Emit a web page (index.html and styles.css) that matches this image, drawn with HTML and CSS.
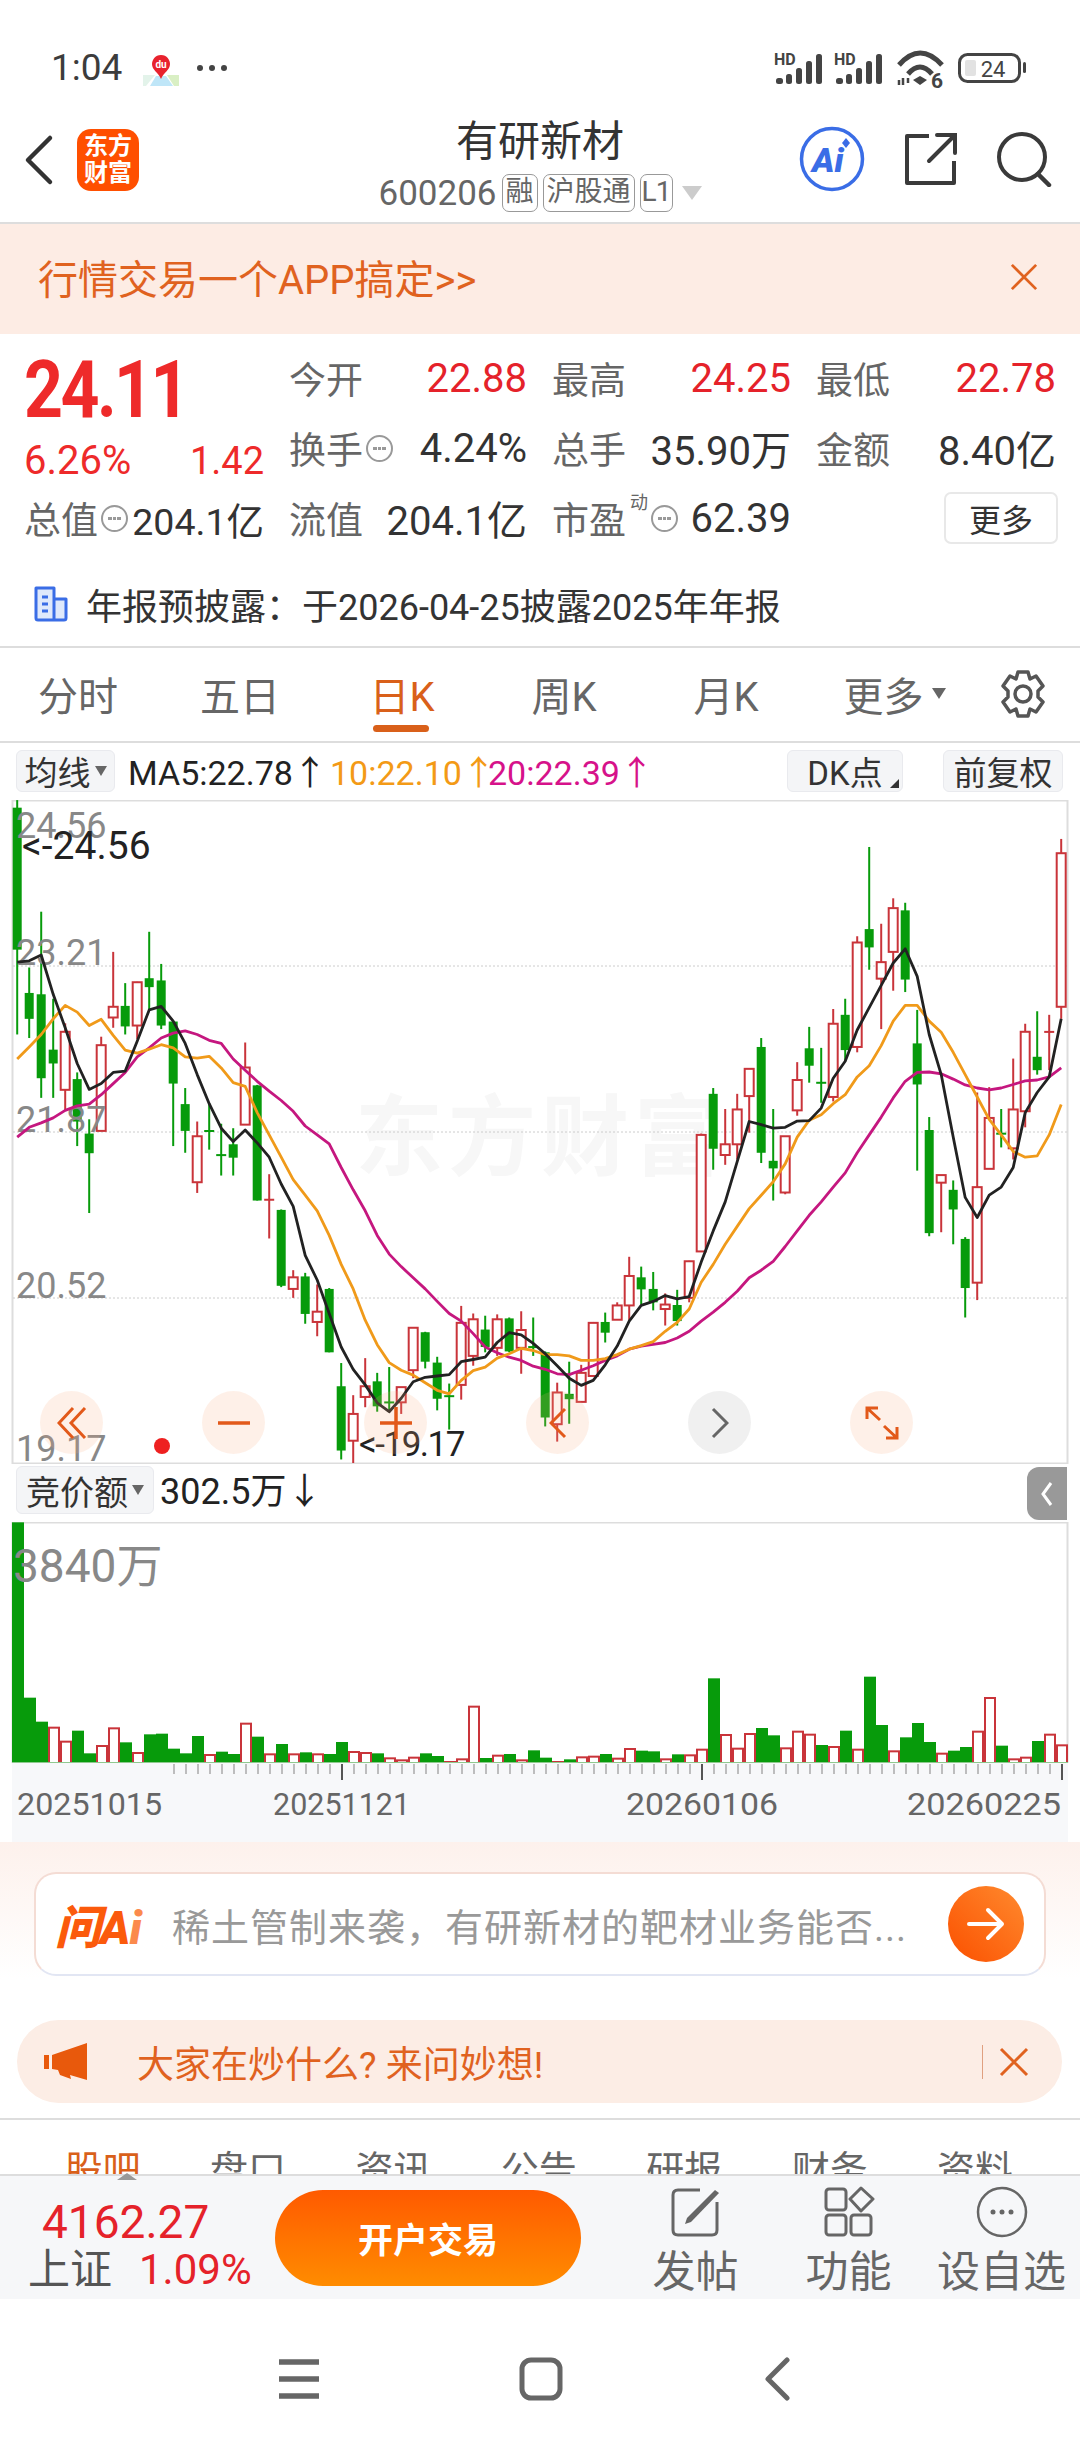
FILE: index.html
```html
<!DOCTYPE html>
<html>
  <head>
    <meta charset="utf-8">
    <title>有研新材</title>
    <link rel="stylesheet" href="styles.css">
  </head>
  <body>
    <div class="status_bar">
      <span class="status_time">1:04</span>
      <svg class="status_map" width="36" height="36" viewBox="0 0 36 36">
        <rect width="36" height="36" rx="8" fill="#fff"/>
        <path d="M0 25 L12 25 L3 36 L0 36 Z" fill="#e3f3ea"/>
        <path d="M13 26 L23 26 L30 36 L7 36 Z" fill="#bfe6f8"/>
        <path d="M24 25 L36 25 L36 36 L31 36 Z" fill="#d9efc4"/>
        <path d="M18 5 C12 5 9 10 9 14 C9 20 15 22 18 29 C21 22 27 20 27 14 C27 10 24 5 18 5 Z" fill="#e8222e"/>
        <text class="status_du" x="18" y="18" text-anchor="middle">du</text>
      </svg>
      <span class="status_dots"><i></i><i></i><i></i></span>
      <svg class="status_right" width="262" height="40" viewBox="770 50 262 40">
        <g>
          <text class="status_hd" x="776" y="65">HD</text>
          <rect x="778" y="78" width="7" height="6" rx="2.5" fill="#444"/>
          <rect x="788" y="74" width="6" height="10" rx="2.5" fill="#444"/>
          <rect x="798" y="68" width="6" height="16" rx="2.5" fill="#444"/>
          <rect x="808" y="61" width="6" height="23" rx="2.5" fill="#444"/>
          <rect x="818" y="54" width="6" height="30" rx="2.5" fill="#444"/>
        </g>
        <g transform="translate(60 0)">
          <text class="status_hd" x="776" y="65">HD</text>
          <rect x="778" y="78" width="7" height="6" rx="2.5" fill="#444"/>
          <rect x="788" y="74" width="6" height="10" rx="2.5" fill="#444"/>
          <rect x="798" y="68" width="6" height="16" rx="2.5" fill="#444"/>
          <rect x="808" y="61" width="6" height="23" rx="2.5" fill="#444"/>
          <rect x="818" y="54" width="6" height="30" rx="2.5" fill="#444"/>
        </g>
        <path d="M901 65 Q922 41 944 65" fill="none" stroke="#444" stroke-width="5"/>
        <path d="M910 74 Q922 60 934 74" fill="none" stroke="#444" stroke-width="5"/>
        <path d="M915 80 L922 76 L929 80 L922 85 Z" fill="#444"/>
        <path d="M901 80 V85 M905 78 V85 M910 78 V83" stroke="#444" stroke-width="2.5"/>
        <text class="status_six" x="933" y="88">6</text>
        <rect x="961.5" y="54.5" width="60" height="27" rx="8" fill="none" stroke="#444" stroke-width="3"/>
        <rect x="967" y="60" width="11" height="16" rx="2" fill="#e2e2e2"/>
        <text class="status_batt" x="995" y="77" text-anchor="middle">24</text>
        <rect x="1025" y="62" width="3" height="11" rx="1.5" fill="#444"/>
      </svg>
    </div>

    <div class="nav_bar">
      <div class="nav_left">
        <svg width="32" height="52" viewBox="0 0 32 52"><path d="M27 4 L5 26 L27 48" fill="none" stroke="#333" stroke-width="4.5" stroke-linecap="round" stroke-linejoin="round"/></svg>
        <div class="nav_logo"><span>东方</span><span>财富</span></div>
      </div>
      <div class="nav_center">
        <div class="nav_title">有研新材</div>
        <div class="nav_sub">
          <span class="nav_code">600206</span>
          <span class="nav_tag">融</span>
          <span class="nav_tag">沪股通</span>
          <span class="nav_tag nav_level">L1</span>
          <span class="nav_tri"></span>
        </div>
      </div>
      <div class="nav_right">
        <svg width="66" height="66" viewBox="0 0 66 66">
          <circle cx="33" cy="33" r="30.5" fill="none" stroke="#3a6de6" stroke-width="3.5"/>
          <text class="nav_ai" x="13" y="46">Ai</text>
          <path d="M47 12 L51 17 L47 22 L43 17 Z" fill="#3a6de6"/>
        </svg>
        <svg width="54" height="54" viewBox="0 0 54 54">
          <path d="M25 4 H3 V51 H50 V29" fill="none" stroke="#3a3a3a" stroke-width="4" stroke-linejoin="round"/>
          <path d="M25 29 L50 4 M33 3 H51 V21" fill="none" stroke="#3a3a3a" stroke-width="4" stroke-linecap="round"/>
        </svg>
        <svg width="56" height="56" viewBox="0 0 56 56">
          <circle cx="25" cy="26" r="23" fill="none" stroke="#3a3a3a" stroke-width="4"/>
          <path d="M41 43 L52 54" stroke="#3a3a3a" stroke-width="4.5" stroke-linecap="round"/>
        </svg>
      </div>
    </div>

    <div class="promo_bar">
      <span>行情交易一个APP搞定&gt;&gt;</span>
      <svg width="28" height="28" viewBox="0 0 30 30"><path d="M2 2 L28 28 M28 2 L2 28" stroke="#e0621f" stroke-width="3"/></svg>
    </div>

    <div class="quote_grid">
      <div class="quote_price">
        <div class="quote_big">24.11</div>
        <div class="quote_change"><span>6.26%</span><span class="quote_delta">1.42</span></div>
      </div>
      <div class="quote_cell"><span class="quote_label">今开</span><span class="quote_up">22.88</span></div>
      <div class="quote_cell"><span class="quote_label">最高</span><span class="quote_up">24.25</span></div>
      <div class="quote_cell"><span class="quote_label">最低</span><span class="quote_up">22.78</span></div>
      <div class="quote_cell">
        <span class="quote_label">换手<i class="quote_more"></i></span><span>4.24%</span>
      </div>
      <div class="quote_cell"><span class="quote_label">总手</span><span>35.90万</span></div>
      <div class="quote_cell"><span class="quote_label">金额</span><span>8.40亿</span></div>
      <div class="quote_cell">
        <span class="quote_label">总值<i class="quote_more"></i></span><span class="quote_tight">204.1亿</span>
      </div>
      <div class="quote_cell"><span class="quote_label">流值</span><span>204.1亿</span></div>
      <div class="quote_cell">
        <span class="quote_label">市盈<sup class="quote_sup">动</sup><i class="quote_more"></i></span><span>62.39</span>
      </div>
      <div class="quote_cell quote_end"><button class="quote_button">更多</button></div>
    </div>

    <div class="notice_row">
      <svg width="34" height="36" viewBox="0 0 34 36">
        <path d="M2 2 H20 V34 H4 Q2 34 2 32 Z M20 13 H32 V32 Q32 34 30 34 H20" fill="#dfe9fb" stroke="#3a6de6" stroke-width="3" stroke-linejoin="round"/>
        <path d="M8 11 H14 M8 18 H14 M8 25 H14" stroke="#3a6de6" stroke-width="3"/>
      </svg>
      <span>年报预披露：于2026-04-25披露2025年年报</span>
    </div>

    <div class="period_tabs">
      <span class="period_tab">分时</span>
      <span class="period_tab">五日</span>
      <span class="period_tab period_active">日K</span>
      <span class="period_tab">周K</span>
      <span class="period_tab">月K</span>
      <span class="period_tab period_last">更多<i class="period_tri"></i></span>
      <svg class="period_gear" width="48" height="50" viewBox="0 0 48 50">
        <path d="M19 3 H29 L31 10 L37 7 L44 17 L39 22 V28 L44 33 L37 43 L31 40 L29 47 H19 L17 40 L11 43 L4 33 L9 28 V22 L4 17 L11 7 L17 10 Z" fill="none" stroke="#555" stroke-width="3.5" stroke-linejoin="round"/>
        <circle cx="24" cy="25" r="8" fill="none" stroke="#555" stroke-width="3.5"/>
      </svg>
    </div>

    <div class="ma_bar">
      <span class="ma_chip">均线<i class="ma_tri"></i></span>
      <span class="ma_item ma_five">MA5:22.78↑</span>
      <span class="ma_item ma_ten">10:22.10↑</span>
      <span class="ma_item ma_twenty">20:22.39↑</span>
      <span class="ma_chip ma_dk">DK点<i class="ma_corner"></i></span>
      <span class="ma_chip ma_fq">前复权</span>
    </div>

    <div class="kline_box">
      <svg class="chart_svg" width="1080" height="664" viewBox="0 800 1080 664">
        <text class="chart_mark" x="355" y="1168">东方财富</text>
        <g id="kline_grid"></g>
        <g id="kline_candles"></g>
        <text class="chart_axis" x="16" y="838">24.56</text>
        <text class="chart_axis" x="16" y="965">23.21</text>
        <text class="chart_axis" x="16" y="1132">21.87</text>
        <text class="chart_axis" x="16" y="1298">20.52</text>
        <text class="chart_axis" x="16" y="1461">19.17</text>
        <g id="kline_lines"></g>
        <text class="chart_flag" x="22" y="859">&lt;-24.56</text>
        <text class="chart_flag chart_flag_low" x="359" y="1456">&lt;-19.17</text>
        <circle cx="162" cy="1446" r="8" fill="#ee2020"/>
      </svg>
      <div class="zoom_row">
        <span class="zoom_btn">
          <svg width="30" height="34" viewBox="0 0 30 34"><path d="M16 2 L2 17 L16 32 M28 2 L14 17 L28 32" fill="none" stroke="#e2591a" stroke-width="3"/></svg>
        </span>
        <span class="zoom_btn">
          <svg width="32" height="6" viewBox="0 0 32 6"><path d="M0 3 H32" stroke="#e2591a" stroke-width="3.5"/></svg>
        </span>
        <span class="zoom_btn">
          <svg width="32" height="32" viewBox="0 0 32 32"><path d="M0 16 H32 M16 0 V32" stroke="#e2591a" stroke-width="3.5"/></svg>
        </span>
        <span class="zoom_btn">
          <svg width="18" height="32" viewBox="0 0 18 32"><path d="M16 2 L2 16 L16 30" fill="none" stroke="#e2591a" stroke-width="3"/></svg>
        </span>
        <span class="zoom_btn zoom_grey">
          <svg width="18" height="32" viewBox="0 0 18 32"><path d="M2 2 L16 16 L2 30" fill="none" stroke="#666" stroke-width="3"/></svg>
        </span>
        <span class="zoom_btn">
          <svg width="34" height="34" viewBox="0 0 34 34"><path d="M2 13 V2 H13 M2 2 L15 14 M32 21 V32 H21 M32 32 L19 20" fill="none" stroke="#e2591a" stroke-width="3"/></svg>
        </span>
      </div>
    </div>

    <div class="auction_bar">
      <span class="ma_chip auction_chip">竞价额<i class="ma_tri"></i></span>
      <span class="ma_item">302.5万↓</span>
      <span class="auction_tab">
        <svg width="12" height="26" viewBox="0 0 12 26"><path d="M10 2 L2 13 L10 24" fill="none" stroke="#fff" stroke-width="3"/></svg>
      </span>
    </div>

    <svg class="chart_svg" width="1080" height="241" viewBox="0 1522 1080 241">
      <rect x="12.5" y="1522.5" width="1055" height="241" fill="#fff" stroke="#ddd" stroke-width="2"/>
      <g id="volume_bars"></g>
      <text class="chart_vol" x="13" y="1582">3840万</text>
    </svg>

    <svg class="chart_svg" width="1080" height="79" viewBox="0 1763 1080 79">
      <rect x="12" y="1763" width="1056" height="79" fill="#f7f8fa"/>
      <g id="axis_ticks"></g>
      <text class="chart_date" x="17" y="1815" textLength="145" lengthAdjust="spacingAndGlyphs">20251015</text>
      <text class="chart_date" x="273" y="1815" textLength="137" lengthAdjust="spacingAndGlyphs">20251121</text>
      <text class="chart_date" x="626" y="1815" textLength="152" lengthAdjust="spacingAndGlyphs">20260106</text>
      <text class="chart_date" x="907" y="1815" textLength="154" lengthAdjust="spacingAndGlyphs">20260225</text>
    </svg>

    <div class="ask_area">
      <div class="ask_card">
        <span class="ask_logo">问A<b>i</b></span>
        <span class="ask_text">稀土管制来袭，有研新材的靶材业务能否...</span>
        <span class="ask_go">
          <svg width="38" height="34" viewBox="0 0 38 34"><path d="M2 17 H35 M21 3 L35 17 L21 31" fill="none" stroke="#fff" stroke-width="4" stroke-linecap="round" stroke-linejoin="round"/></svg>
        </span>
      </div>
    </div>

    <div class="hot_bar">
      <svg width="44" height="38" viewBox="0 0 44 38">
        <path d="M0 12 H5 V26 H0 Z M8 12 L43 0 V37 L26 32 L27 36 L16 32 L14 27 L8 26 Z" fill="#e8590c"/>
      </svg>
      <span class="hot_text">大家在炒什么? 来问妙想!</span>
      <i class="hot_line"></i>
      <svg width="30" height="30" viewBox="0 0 30 30"><path d="M2 2 L28 28 M28 2 L2 28" stroke="#e0621f" stroke-width="3"/></svg>
    </div>

    <div class="info_tabs">
      <span class="info_tab info_active">股吧</span>
      <span class="info_tab">盘口</span>
      <span class="info_tab">资讯</span>
      <span class="info_tab">公告</span>
      <span class="info_tab">研报</span>
      <span class="info_tab">财务</span>
      <span class="info_tab">资料</span>
    </div>

    <div class="bottom_bar">
      <div class="index_box">
        <i class="index_tri"></i>
        <div class="index_value">4162.27</div>
        <div class="index_row"><span class="index_name">上证</span><span class="index_pct">1.09%</span></div>
      </div>
      <div class="trade_button">开户交易</div>
      <div class="tool_item">
        <svg width="52" height="52" viewBox="0 0 52 52">
          <path d="M30 4 H8 Q3 4 3 9 V44 Q3 49 8 49 H42 Q47 49 47 44 V16" fill="none" stroke="#666" stroke-width="3"/>
          <path d="M17 32 L45 4 L49 7 L21 36 L15 38 Z" fill="#666"/>
        </svg>
        <span>发帖</span>
      </div>
      <div class="tool_item">
        <svg width="52" height="52" viewBox="0 0 52 52">
          <rect x="3" y="3" width="20" height="21" rx="3" fill="none" stroke="#666" stroke-width="3"/>
          <rect x="3" y="29" width="20" height="20" rx="3" fill="none" stroke="#666" stroke-width="3"/>
          <rect x="28" y="29" width="20" height="20" rx="3" fill="none" stroke="#666" stroke-width="3"/>
          <path d="M38 2 L50 13 L38 25 L27 13 Z" fill="none" stroke="#666" stroke-width="3" stroke-linejoin="round"/>
        </svg>
        <span>功能</span>
      </div>
      <div class="tool_item">
        <svg width="52" height="52" viewBox="0 0 52 52">
          <circle cx="26" cy="26" r="24" fill="none" stroke="#666" stroke-width="2.5"/>
          <circle cx="17" cy="26" r="2.5" fill="#666"/>
          <circle cx="26" cy="26" r="2.5" fill="#666"/>
          <circle cx="35" cy="26" r="2.5" fill="#666"/>
        </svg>
        <span>设自选</span>
      </div>
    </div>

    <div class="system_nav">
      <svg width="42" height="42" viewBox="0 0 42 42"><path d="M1 4 H41 M1 21 H41 M1 38 H41" stroke="#666" stroke-width="5.5"/></svg>
      <svg width="44" height="44" viewBox="0 0 44 44"><rect x="3" y="3" width="38" height="38" rx="9" fill="none" stroke="#666" stroke-width="5"/></svg>
      <svg width="30" height="44" viewBox="0 0 30 44"><path d="M25 3 L6 22 L25 41" fill="none" stroke="#666" stroke-width="5" stroke-linecap="round" stroke-linejoin="round"/></svg>
    </div>

    <script src="chart.js"></script>
  </body>
</html>
```

FILE: styles.css
```css
html, body
  {
  margin: 0;
  padding: 0;
  }

body
  {
  width: 1080px;
  height: 2460px;
  overflow: hidden;
  background: #fff;
  color: #333;
  font-family: Roboto, "Noto Sans CJK SC", sans-serif;
  }

svg
  {
  display: block;
  }

i
  {
  font-style: normal;
  }

/* Status bar */
.status_bar
  {
  height: 104px;
  box-sizing: border-box;
  padding: 48px 0 0 51px;
  display: flex;
  align-items: flex-start;
  position: relative;
  }

.status_time
  {
  font-size: 37px;
  line-height: 40px;
  color: #3c3c3c;
  width: 92px;
  }

.status_map
  {
  margin-top: 2px;
  }

.status_du
  {
  font: 700 10px Roboto, sans-serif;
  fill: #fff;
  }

.status_dots
  {
  display: flex;
  gap: 6px;
  margin: 17px 0 0 18px;
  }

.status_dots i
  {
  width: 6px;
  height: 6px;
  border-radius: 50%;
  background: #444;
  }

.status_right
  {
  margin: 2px 50px 0 auto;
  }

.status_hd
  {
  font: 700 16px Roboto, sans-serif;
  fill: #444;
  }

.status_six
  {
  font: 700 21px Roboto, sans-serif;
  fill: #444;
  }

.status_batt
  {
  font: 400 22px Roboto, sans-serif;
  fill: #444;
  }

/* Title bar */
.nav_bar
  {
  height: 120px;
  box-sizing: border-box;
  border-bottom: 2px solid #ddd;
  display: grid;
  grid-template-columns: 1fr auto 1fr;
  }

.nav_left
  {
  display: flex;
  align-items: center;
  gap: 22px;
  padding: 0 0 6px 23px;
  }

.nav_logo
  {
  width: 62px;
  height: 62px;
  background: #ff4f00;
  border-radius: 14px;
  color: #fff;
  font-size: 24px;
  font-weight: 700;
  line-height: 27px;
  display: flex;
  flex-direction: column;
  align-items: center;
  justify-content: center;
  }

.nav_center
  {
  padding-top: 15px;
  }

.nav_title
  {
  font-size: 42px;
  line-height: 46px;
  text-align: center;
  color: #333;
  }

.nav_sub
  {
  display: flex;
  align-items: center;
  gap: 5px;
  margin-top: 9px;
  height: 38px;
  }

.nav_code
  {
  font-size: 35px;
  color: #666;
  }

.nav_tag
  {
  box-sizing: border-box;
  height: 38px;
  border: 1.5px solid #999;
  border-radius: 7px;
  padding: 0 3px;
  font-size: 28px;
  line-height: 33px;
  color: #666;
  }

.nav_level
  {
  width: 33px;
  padding: 0;
  text-align: center;
  letter-spacing: -1px;
  }

.nav_tri
  {
  width: 0;
  height: 0;
  border-left: 10px solid transparent;
  border-right: 10px solid transparent;
  border-top: 14px solid #ccc;
  margin-left: 4px;
  }

.nav_right
  {
  display: flex;
  justify-content: flex-end;
  align-items: center;
  gap: 39px;
  padding: 0 27px 8px 0;
  }

.nav_ai
  {
  font: italic 900 34px Roboto, sans-serif;
  fill: #3a6de6;
  }

/* Promo strip */
.promo_bar
  {
  height: 110px;
  box-sizing: border-box;
  background: #fdece4;
  display: flex;
  align-items: center;
  justify-content: space-between;
  padding: 0 42px 4px 38px;
  color: #e0621f;
  font-size: 40px;
  }

/* Quote */
.quote_grid
  {
  display: grid;
  grid-template-columns: 240px 238px 239px 240px;
  grid-auto-rows: 70px;
  column-gap: 25px;
  padding: 9px 0 0 24px;
  font-size: 40px;
  color: #333;
  white-space: nowrap;
  }

.quote_price
  {
  grid-row: span 2;
  color: #ee2a2a;
  }

.quote_big
  {
  font-size: 80px;
  font-weight: 700;
  line-height: 94px;
  letter-spacing: -3px;
  transform: scaleX(0.85);
  transform-origin: left center;
  }

.quote_change
  {
  display: flex;
  justify-content: space-between;
  font-size: 40px;
  line-height: 48px;
  }

.quote_delta
  {
  font-size: 38px;
  }

.quote_cell
  {
  display: flex;
  justify-content: space-between;
  align-items: center;
  }

.quote_end
  {
  justify-content: flex-end;
  }

.quote_label
  {
  color: #666;
  font-size: 37px;
  display: flex;
  align-items: center;
  }

.quote_up
  {
  color: #e5222a;
  }

.quote_tight
  {
  font-size: 37.5px;
  }

.quote_more
  {
  box-sizing: border-box;
  width: 27px;
  height: 27px;
  margin-left: 3px;
  border: 2px solid #999;
  border-radius: 50%;
  background: radial-gradient(circle 2px at 30% 50%, #999 99%, transparent), radial-gradient(circle 2px at 50% 50%, #999 99%, transparent), radial-gradient(circle 2px at 70% 50%, #999 99%, transparent);
  }

.quote_sup
  {
  font-size: 18px;
  line-height: 18px;
  margin: -30px 0 0 4px;
  }

.quote_button
  {
  width: 114px;
  height: 52px;
  background: #fff;
  border: 2px solid #e8e8e8;
  border-radius: 7px;
  font: inherit;
  font-size: 32px;
  color: #333;
  padding: 0;
  margin-right: -2px;
  }

/* Notice */
.notice_row
  {
  height: 95px;
  box-sizing: border-box;
  padding: 8px 0 0 34px;
  display: flex;
  align-items: center;
  gap: 18px;
  font-size: 36px;
  color: #333;
  border-bottom: 2px solid #ddd;
  }

/* Period tabs */
.period_tabs
  {
  height: 95px;
  box-sizing: border-box;
  border-bottom: 2px solid #ddd;
  display: flex;
  align-items: center;
  font-size: 40px;
  color: #666;
  padding-bottom: 2px;
  margin-left: -3px;
  }

.period_tab
  {
  flex: 0 0 162px;
  display: flex;
  align-items: center;
  justify-content: center;
  position: relative;
  }

.period_active
  {
  color: #d9601a;
  }

.period_active::after
  {
  content: "";
  position: absolute;
  left: 52px;
  width: 56px;
  top: 60px;
  height: 7px;
  border-radius: 4px;
  background: #d9601a;
  }

.period_last
  {
  box-sizing: border-box;
  padding-left: 13px;
  }

.period_tri
  {
  width: 0;
  height: 0;
  border-left: 7px solid transparent;
  border-right: 7px solid transparent;
  border-top: 11px solid #666;
  margin-left: 8px;
  }

.period_gear
  {
  margin-left: 30px;
  }

/* MA row */
.ma_bar
  {
  height: 57px;
  box-sizing: border-box;
  padding: 0 0 2px 16px;
  display: flex;
  align-items: center;
  font-size: 34px;
  }

.ma_chip
  {
  box-sizing: border-box;
  height: 42px;
  background: #f4f5f7;
  border: 1.5px solid #e9eaee;
  border-radius: 6px;
  display: flex;
  align-items: center;
  justify-content: center;
  color: #333;
  font-size: 33px;
  width: 99px;
  }

.ma_tri
  {
  width: 0;
  height: 0;
  border-left: 6px solid transparent;
  border-right: 6px solid transparent;
  border-top: 10px solid #666;
  margin-left: 4px;
  }

.ma_item
  {
  color: #222;
  white-space: nowrap;
  }

.ma_five
  {
  margin-left: 13px;
  width: 202px;
  }

.ma_ten
  {
  color: #f39a16;
  width: 158px;
  }

.ma_twenty
  {
  color: #d6128a;
  width: 299px;
  }

.ma_dk
  {
  width: 116px;
  position: relative;
  }

.ma_corner
  {
  position: absolute;
  right: 3px;
  bottom: 3px;
  width: 0;
  height: 0;
  border-left: 9px solid transparent;
  border-bottom: 9px solid #333;
  }

.ma_fq
  {
  width: 120px;
  margin-left: 40px;
  }

/* Charts */
.kline_box
  {
  position: relative;
  height: 663px;
  }

.chart_svg
  {
  overflow: hidden;
  }

.chart_mark
  {
  font: 700 88px "Noto Sans CJK SC", sans-serif;
  letter-spacing: 5px;
  fill: #f7f7f7;
  }

.chart_axis
  {
  font: 400 36px Roboto, sans-serif;
  fill: #888;
  }

.chart_flag
  {
  font: 400 39px Roboto, sans-serif;
  fill: #222;
  }

.chart_flag_low
  {
  font-size: 35px;
  letter-spacing: -1.5px;
  }

.chart_vol
  {
  font: 400 46px Roboto, "Noto Sans CJK SC", sans-serif;
  fill: #888;
  }

.chart_date
  {
  font: 400 32px Roboto, sans-serif;
  fill: #666;
  }

.zoom_row
  {
  position: absolute;
  left: 40px;
  top: 591px;
  display: flex;
  gap: 99px;
  }

.zoom_btn
  {
  width: 63px;
  height: 63px;
  border-radius: 50%;
  background: rgba(250, 170, 130, 0.18);
  display: flex;
  align-items: center;
  justify-content: center;
  }

.zoom_grey
  {
  background: rgba(150, 150, 150, 0.14);
  }

.auction_bar
  {
  height: 59px;
  display: flex;
  align-items: flex-end;
  padding: 0 13px 2px 16px;
  box-sizing: border-box;
  font-size: 36px;
  }

.auction_chip
  {
  width: 138px;
  height: 48px;
  margin: 0 6px 6px 0;
  font-size: 34px;
  }

.auction_bar .ma_item
  {
  margin-bottom: 6px;
  }

.auction_tab
  {
  margin-left: auto;
  width: 40px;
  height: 53px;
  background: #999;
  border-radius: 12px 0 0 12px;
  display: flex;
  align-items: center;
  justify-content: center;
  }

/* Ask box */
.ask_area
  {
  height: 161px;
  box-sizing: border-box;
  padding: 30px 34px 0;
  background: linear-gradient(#fdf1ec, #fff 85%);
  }

.ask_card
  {
  box-sizing: border-box;
  height: 104px;
  background: #fff;
  border: 2px solid #f4dcd4;
  border-bottom-color: #e2e6f3;
  border-radius: 22px;
  display: flex;
  align-items: center;
  padding: 0 20px 0 19px;
  }

.ask_logo
  {
  font-size: 46px;
  font-weight: 900;
  font-style: italic;
  color: #fb5a0c;
  width: 117px;
  letter-spacing: -1px;
  }

.ask_logo b
  {
  color: #fb8a4c;
  }

.ask_text
  {
  font-size: 38px;
  letter-spacing: 1px;
  color: #999;
  white-space: nowrap;
  }

.ask_go
  {
  margin-left: auto;
  width: 76px;
  height: 76px;
  border-radius: 50%;
  background: linear-gradient(45deg, #fb5000, #ff8a2e);
  display: flex;
  align-items: center;
  justify-content: center;
  }

/* Hot strip */
.hot_bar
  {
  box-sizing: border-box;
  height: 83px;
  margin: 17px 18px 0 17px;
  background: #fcede5;
  border-radius: 42px;
  display: flex;
  align-items: center;
  padding: 0 33px 0 27px;
  color: #e0621f;
  font-size: 37px;
  }

.hot_text
  {
  margin-left: 49px;
  }

.hot_line
  {
  margin-left: auto;
  width: 1.5px;
  height: 34px;
  background: #e0a080;
  margin-right: 16px;
  }

/* Info tabs */
.info_tabs
  {
  margin-top: 15px;
  height: 56px;
  box-sizing: border-box;
  border-top: 2px solid #ddd;
  overflow: hidden;
  display: flex;
  padding: 26px 0 0 30px;
  font-size: 38px;
  color: #666;
  }

.info_tab
  {
  flex: 0 0 145.4px;
  text-align: center;
  line-height: 48px;
  }

.info_active
  {
  color: #d9601a;
  }

/* Bottom bar */
.bottom_bar
  {
  box-sizing: border-box;
  height: 125px;
  border-top: 2px solid #ddd;
  background: #f6f7f9;
  display: flex;
  align-items: center;
  }

.index_box
  {
  width: 275px;
  box-sizing: border-box;
  padding-left: 28px;
  position: relative;
  }

.index_tri
  {
  position: absolute;
  left: 117px;
  top: -10px;
  width: 0;
  height: 0;
  border-left: 10px solid transparent;
  border-right: 10px solid transparent;
  border-bottom: 7px solid #999;
  }

.index_value
  {
  margin: 14px 0 0 14px;
  font-size: 46px;
  line-height: 50px;
  color: #e5222a;
  }

.index_row
  {
  display: flex;
  align-items: center;
  line-height: 46px;
  }

.index_name
  {
  font-size: 42px;
  color: #555;
  width: 111px;
  }

.index_pct
  {
  font-size: 42px;
  color: #e5222a;
  }

.trade_button
  {
  width: 306px;
  height: 96px;
  border-radius: 48px;
  background: linear-gradient(#ff5a00, #ff8c00);
  color: #fff;
  font-size: 35px;
  font-weight: 700;
  display: flex;
  align-items: center;
  justify-content: center;
  margin-right: 38px;
  }

.tool_item
  {
  flex: 0 0 153px;
  display: flex;
  flex-direction: column;
  align-items: center;
  font-size: 43px;
  line-height: 52px;
  color: #666;
  gap: 8px;
  padding-top: 8px;
  }

/* Android nav */
.system_nav
  {
  height: 160px;
  box-sizing: border-box;
  padding-right: 11px;
  display: flex;
  align-items: center;
  justify-content: center;
  gap: 199px;
  }
```

FILE: chart.js
```js
// Candles and averages were read off in chart units, one unit is
// 1/2.24 px downwards from y=780.
var SVG_NS = "http://www.w3.org/2000/svg";
var GREEN = "#079b0b";
var RED = "#c9343a";

// high, body top, body bottom, low, colour
var candles = [
  [45,62,380,570,"g"],[420,477,535,578,"g"],[295,480,668,712,"g"],[490,604,635,712,"g"],
  [545,564,694,740,"r"],[655,670,765,820,"g"],[760,792,836,970,"g"],[575,594,786,786,"r"],
  [385,508,532,555,"r"],[455,506,552,570,"g"],[452,453,550,580,"r"],[340,444,464,515,"g"],
  [412,449,550,558,"g"],[540,541,680,820,"g"],[690,726,786,835,"g"],[765,798,901,925,"r"],
  [725,784,786,828,"g"],[770,838,841,886,"g"],[780,816,846,886,"g"],[588,644,772,772,"r"],
  [683,684,942,942,"g"],[883,938,943,1027,"r"],[962,963,1133,1136,"g"],[1098,1114,1140,1160,"r"],
  [1104,1112,1196,1218,"g"],[1130,1191,1214,1246,"r"],[1138,1140,1282,1282,"g"],[1306,1358,1502,1522,"g"],
  [1378,1420,1480,1530,"r"],[1295,1358,1382,1405,"r"],[1328,1347,1403,1415,"g"],[1315,1392,1396,1415,"g"],
  [1360,1360,1394,1420,"r"],[1226,1227,1322,1340,"r"],[1236,1237,1303,1318,"g"],[1292,1305,1386,1412,"g"],
  [1352,1378,1381,1455,"g"],[1178,1216,1355,1388,"r"],[1195,1208,1290,1312,"r"],[1200,1231,1270,1282,"g"],
  [1197,1208,1272,1290,"r"],[1204,1206,1280,1282,"g"],[1190,1232,1272,1330,"r"],[1204,1268,1272,1290,"g"],
  [1280,1282,1428,1448,"g"],[1350,1372,1443,1482,"r"],[1303,1375,1387,1442,"g"],[1310,1328,1393,1393,"r"],
  [1214,1216,1335,1335,"r"],[1193,1214,1238,1260,"g"],[1170,1177,1209,1209,"r"],[1068,1111,1177,1210,"r"],
  [1090,1114,1141,1175,"g"],[1102,1140,1170,1188,"g"],[1150,1175,1185,1222,"r"],[1142,1176,1212,1222,"g"],
  [1077,1078,1160,1170,"r"],[792,795,1056,1056,"r"],[690,703,826,873,"g"],[737,816,840,862,"r"],
  [703,738,816,850,"r"],[647,647,708,790,"r"],[578,598,835,858,"g"],[737,853,870,942,"g"],
  [798,798,924,928,"r"],[632,672,740,752,"r"],[553,601,640,678,"g"],[600,676,681,723,"g"],
  [513,546,710,720,"r"],[490,526,605,630,"g"],[350,364,598,610,"r"],[150,334,375,425,"g"],
  [322,408,445,558,"r"],[265,287,385,472,"r"],[275,292,447,475,"g"],[515,590,682,875,"g"],
  [755,784,1015,1022,"g"],[885,885,902,1013,"r"],[897,918,962,1040,"g"],[1024,1028,1138,1204,"g"],
  [700,912,1126,1165,"r"],[688,757,871,871,"r"],[737,790,793,823,"g"],[624,738,825,850,"r"],
  [546,564,742,778,"r"],[518,620,650,660,"g"],[526,562,567,650,"r"],[132,164,508,535,"r"]
  ];

var ma5 = [408,405,392,480,555,635,693,680,655,652,585,515,507,540,590,660,725,780,810,784,
  813,845,905,955,1065,1120,1195,1270,1320,1355,1395,1415,1385,1348,1338,1335,1332,1303,1298,1293,
  1260,1238,1243,1262,1285,1312,1340,1356,1345,1310,1268,1212,1177,1168,1155,1162,1157,1080,1010,945,
  855,765,772,780,778,764,763,735,668,630,560,510,460,410,378,440,570,660,800,935,
  980,930,912,868,745,700,665,535];

var ma10 = [625,598,570,535,505,520,550,536,572,605,612,603,593,600,620,623,619,645,678,686,
  745,795,845,895,930,965,1020,1085,1140,1210,1265,1305,1322,1333,1350,1367,1375,1345,1323,1315,
  1295,1285,1273,1278,1287,1287,1290,1300,1300,1296,1287,1275,1267,1258,1235,1215,1185,1125,1085,1040,
  1000,960,930,900,860,800,762,750,725,705,665,640,595,540,505,505,540,565,610,660,
  710,760,795,832,845,842,795,727];

var ma20 = [800,778,768,757,740,730,726,705,680,655,620,600,578,567,562,570,583,590,625,650,
  675,697,718,742,775,795,815,868,918,965,1020,1062,1090,1115,1140,1168,1195,1212,1240,1270,
  1283,1293,1300,1313,1320,1330,1332,1322,1312,1300,1290,1275,1268,1264,1260,1250,1235,1212,1192,1170,
  1145,1115,1098,1078,1045,1010,975,945,912,880,835,795,755,712,675,655,654,658,670,683,
  690,694,690,682,674,672,665,645];

// Top of each bar in the volume pane, in 1/3 px from y=1480.
var volumes = [
  [127,"g"],[653,"g"],[725,"g"],[740,"r"],[782,"r"],[752,"g"],[820,"g"],[795,"r"],[742,"r"],[787,"g"],
  [816,"r"],[763,"g"],[761,"g"],[806,"g"],[820,"g"],[768,"g"],[822,"r"],[815,"g"],[822,"g"],[728,"r"],
  [770,"g"],[820,"r"],[792,"g"],[820,"r"],[817,"g"],[820,"r"],[822,"g"],[786,"g"],[813,"r"],[816,"r"],
  [820,"g"],[832,"r"],[838,"r"],[830,"r"],[820,"g"],[828,"g"],[843,"r"],[835,"r"],[677,"r"],[834,"g"],
  [824,"r"],[822,"g"],[838,"r"],[811,"g"],[833,"g"],[843,"r"],[838,"g"],[829,"r"],[827,"r"],[822,"g"],
  [833,"r"],[804,"r"],[812,"g"],[814,"g"],[835,"r"],[823,"g"],[823,"r"],[806,"r"],[595,"g"],[762,"r"],
  [803,"r"],[759,"r"],[744,"g"],[766,"g"],[802,"r"],[752,"r"],[761,"r"],[795,"g"],[798,"r"],[752,"g"],
  [806,"r"],[590,"g"],[735,"g"],[811,"r"],[772,"g"],[729,"g"],[786,"g"],[818,"r"],[812,"g"],[801,"g"],
  [752,"r"],[651,"r"],[797,"g"],[835,"r"],[830,"r"],[783,"g"],[761,"r"],[793,"r"]
  ];

function candleX(i)
  {
  return 17.2 + i * 12;
  }

function candleY(v)
  {
  return 780 + v / 2.24;
  }

// Add one svg element to a group.
function add(group, name, attrs)
  {
  var el = document.createElementNS(SVG_NS, name);

  for(var key in attrs)
    el.setAttribute(key, attrs[key]);

  group.appendChild(el);
  }

function drawGrid()
  {
  var group = document.getElementById("kline_grid");

  add(group, "rect", { x: 12.5, y: 800.5, width: 1055, height: 663, fill: "none", stroke: "#ddd", "stroke-width": 2 });

  [966, 1132, 1298].forEach(function(y)
    {
    add(group, "line", { x1: 13, x2: 1067, y1: y, y2: y, stroke: "#ccc", "stroke-dasharray": "2 2" });
    });
  }

function drawCandles()
  {
  var group = document.getElementById("kline_candles");

  candles.forEach(function(c, i)
    {
    var x = candleX(i);
    var color = c[4] === "g" ? GREEN : RED;
    var top = candleY(c[1]);
    var height = candleY(c[2]) - top;

    add(group, "line", { x1: x, x2: x, y1: candleY(c[0]), y2: Math.min(candleY(c[3]), 1463), stroke: color, "stroke-width": 2 });

    if(height < 4)
      add(group, "rect", { x: x - 5, y: top, width: 10, height: 2, fill: color });
    else if(c[4] === "g")
      add(group, "rect", { x: x - 4.5, y: top, width: 9, height: height, fill: color });
    else
      add(group, "rect", { x: x - 4.5, y: top, width: 9, height: height, fill: "#fff", stroke: color, "stroke-width": 2 });
    });
  }

function drawLine(values, color)
  {
  var points = values.map(function(v, i)
    {
    return candleX(i).toFixed(1) + "," + candleY(v).toFixed(1);
    });

  add(document.getElementById("kline_lines"), "polyline",
    { points: points.join(" "), fill: "none", stroke: color, "stroke-width": 2.8, "stroke-linejoin": "round" });
  }

function drawVolumes()
  {
  var group = document.getElementById("volume_bars");
  var base = 1763;

  volumes.forEach(function(v, i)
    {
    var x = 12 + i * 12;
    var top = 1480 + v[0] / 3;

    if(v[1] === "g")
      add(group, "rect", { x: x, y: top, width: 12, height: base - top, fill: GREEN });
    else
      add(group, "rect", { x: x + 1, y: top + 1, width: 10, height: base - top - 1, fill: "#fff", stroke: RED, "stroke-width": 2 });
    });

  add(group, "line", { x1: 12, x2: 1068, y1: base - 0.5, y2: base - 0.5, stroke: "#8fc98f", "stroke-width": 1 });
  }

function drawTicks()
  {
  var group = document.getElementById("axis_ticks");

  for(var x = 174; x < 1066; x += 12)
    add(group, "line", { x1: x, x2: x, y1: 1764, y2: 1774, stroke: "#aaa", "stroke-width": 1.5 });

  [342, 702, 1062].forEach(function(x)
    {
    add(group, "line", { x1: x, x2: x, y1: 1764, y2: 1780, stroke: "#555", "stroke-width": 2 });
    });
  }

drawGrid();
drawCandles();
drawLine(ma20, "#c5177f");
drawLine(ma10, "#f09a1a");
drawLine(ma5, "#222");
drawVolumes();
drawTicks();
```
